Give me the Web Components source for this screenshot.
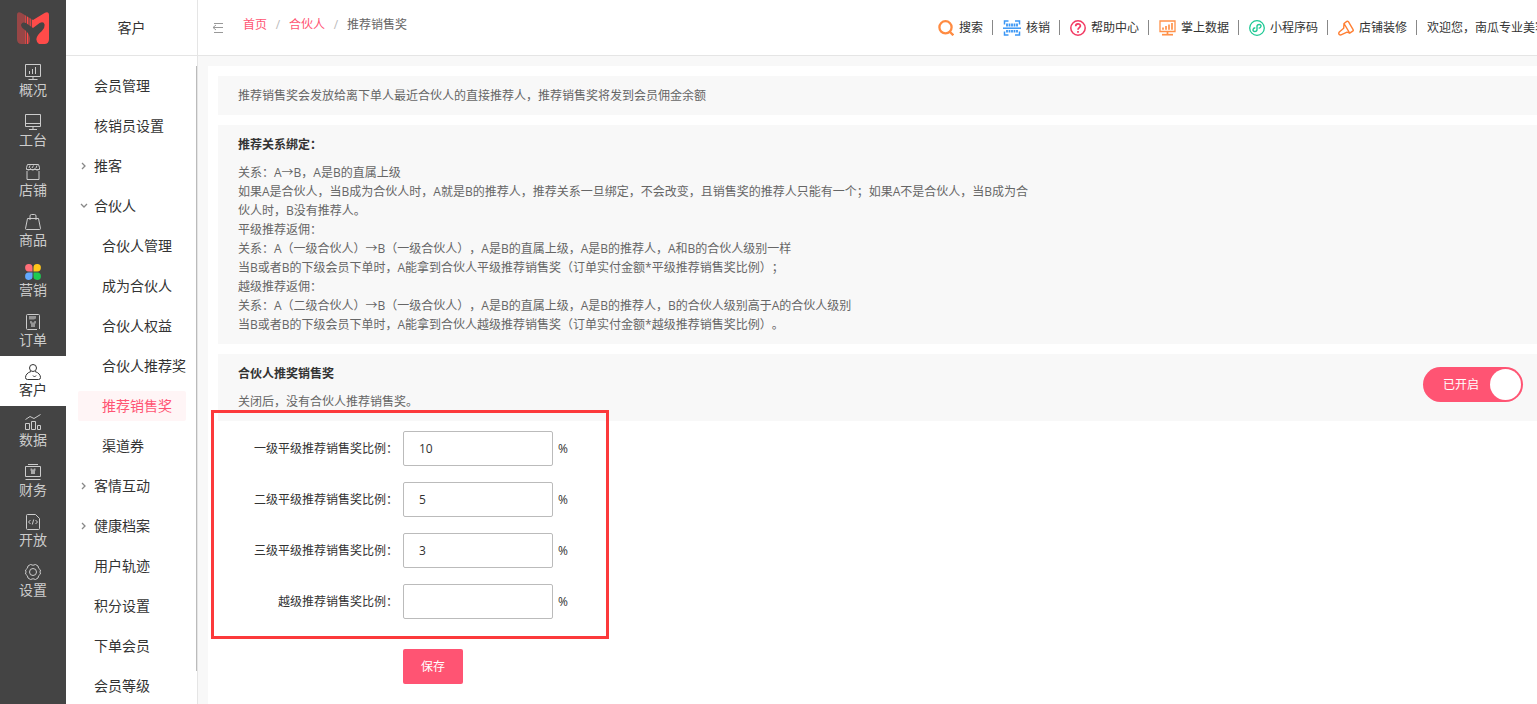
<!DOCTYPE html>
<html lang="zh-CN">
<head>
<meta charset="utf-8">
<meta name="viewport" content="width=device-width, initial-scale=1">
<title>推荐销售奖</title>
<style>
  html, body { height: 100%; margin: 0; }
  body {
    font: 12px/19px "Open Sans", "Noto Sans CJK SC", sans-serif;
    color: #333;
    background: #f8f8f8;
    text-spacing-trim: space-all;
    overflow: hidden;
  }
</style>
</head>
<body>
<app-shell>
  <rail-nav slot="rail">
    <rail-item icon="overview">概况</rail-item>
    <rail-item icon="desk">工台</rail-item>
    <rail-item icon="shop">店铺</rail-item>
    <rail-item icon="bag">商品</rail-item>
    <rail-item icon="clover">营销</rail-item>
    <rail-item icon="order">订单</rail-item>
    <rail-item icon="user" active>客户</rail-item>
    <rail-item icon="chart">数据</rail-item>
    <rail-item icon="money">财务</rail-item>
    <rail-item icon="code">开放</rail-item>
    <rail-item icon="gear">设置</rail-item>
  </rail-nav>

  <side-menu slot="menu" heading="客户">
    <menu-item>会员管理</menu-item>
    <menu-item>核销员设置</menu-item>
    <menu-item arrow="right">推客</menu-item>
    <menu-item arrow="down">合伙人</menu-item>
    <menu-item sub>合伙人管理</menu-item>
    <menu-item sub>成为合伙人</menu-item>
    <menu-item sub>合伙人权益</menu-item>
    <menu-item sub>合伙人推荐奖</menu-item>
    <menu-item sub active>推荐销售奖</menu-item>
    <menu-item sub>渠道券</menu-item>
    <menu-item arrow="right">客情互动</menu-item>
    <menu-item arrow="right">健康档案</menu-item>
    <menu-item>用户轨迹</menu-item>
    <menu-item>积分设置</menu-item>
    <menu-item>下单会员</menu-item>
    <menu-item>会员等级</menu-item>
  </side-menu>

  <top-bar slot="top">
    <crumb-item href="#home">首页</crumb-item>
    <crumb-item href="#partner">合伙人</crumb-item>
    <crumb-item>推荐销售奖</crumb-item>
    <tool-link slot="tools" icon="search">搜索</tool-link>
    <tool-link slot="tools" icon="scan">核销</tool-link>
    <tool-link slot="tools" icon="help">帮助中心</tool-link>
    <tool-link slot="tools" icon="screen">掌上数据</tool-link>
    <tool-link slot="tools" icon="mini">小程序码</tool-link>
    <tool-link slot="tools" icon="brush">店铺装修</tool-link>
    <span slot="welcome">欢迎您，南瓜专业美容</span>
  </top-bar>

  <info-block>推荐销售奖会发放给离下单人最近合伙人的直接推荐人，推荐销售奖将发到会员佣金余额</info-block>

  <info-block heading="推荐关系绑定：">
    <div>关系：A→B，A是B的直属上级</div>
    <div>如果A是合伙人，当B成为合伙人时，A就是B的推荐人，推荐关系一旦绑定，不会改变，且销售奖的推荐人只能有一个；如果A不是合伙人，当B成为合伙人时，B没有推荐人。</div>
    <div>平级推荐返佣：</div>
    <div>关系：A（一级合伙人）→B（一级合伙人），A是B的直属上级，A是B的推荐人，A和B的合伙人级别一样</div>
    <div>当B或者B的下级会员下单时，A能拿到合伙人平级推荐销售奖（订单实付金额*平级推荐销售奖比例）；</div>
    <div>越级推荐返佣：</div>
    <div>关系：A（二级合伙人）→B（一级合伙人），A是B的直属上级，A是B的推荐人，B的合伙人级别高于A的合伙人级别</div>
    <div>当B或者B的下级会员下单时，A能拿到合伙人越级推荐销售奖（订单实付金额*越级推荐销售奖比例）。</div>
  </info-block>

  <info-block heading="合伙人推奖销售奖">
    关闭后，没有合伙人推荐销售奖。
    <toggle-switch slot="action">已开启</toggle-switch>
  </info-block>

  <ratio-form>
    <percent-field label="一级平级推荐销售奖比例：" value="10"></percent-field>
    <percent-field label="二级平级推荐销售奖比例：" value="5"></percent-field>
    <percent-field label="三级平级推荐销售奖比例：" value="3"></percent-field>
    <percent-field label="越级推荐销售奖比例：" value=""></percent-field>
    <save-button slot="submit">保存</save-button>
  </ratio-form>
</app-shell>

<script>
const svg = (w, body, extra = '') =>
  `<svg width="${w}" height="16" viewBox="0 0 ${w} 16" fill="none" stroke="currentColor" ${extra} aria-hidden="true">${body}</svg>`;

const ICONS = {
  overview: svg(16, '<path d="M.5.5h15v12H.5zM8 12.5v3M3.500 15.500h9M4.500 7v3M7.500 5v5M10.500 3v7" />'),
  desk: svg(16, '<path d="M.5.5h15v12H.5zM.5 9.500h15M8 12.500v3M4 15.500h8"/>'),
  shop: svg(16, '<path d="M2.500.5h11l1 3v2H1.500v-2zM1.500 4.500c1 2 3 2 4 0 1 2 3.500 2 4.500 0 1 2 3.500 2 4.500 0M2 7v8.500h12V7M5 1.500 4 4M8.500 1.500 7 4M12 1.500 11 4"/>'),
  bag: svg(16, '<path d="M2.500 4.500h11l2 10q0 1-1 1h-13q-1 0-1-1zM5 6V2q0-1.500 1.500-1.500h3Q11 .5 11 2v4"/>'),
  clover: svg(16, '<path fill="#ff6f79" d="M7.500 7.500H4A3.700 3.700 0 1 1 7.500 4z"/><path fill="#ffc61a" d="M8.500 7.500V4A3.700 3.700 0 1 1 12 7.500z"/><path fill="#62a8ff" d="M7.500 8.500V12A3.700 3.700 0 1 1 4 8.500z"/><path fill="#1fcb52" d="M8.500 8.500H12A3.700 3.700 0 1 1 8.500 12z"/>', 'style="stroke:none"'),
  order: svg(16, '<path d="M12 15.500H2.500q-1 0-1-1v-13q0-1 1-1h11q1 0 1 1V15"/><path stroke="none" fill="currentColor" opacity=".6" d="M4 2h7v2.500l-2 1H4z"/><path stroke="none" fill="currentColor" opacity=".6" d="M5 7h1.500L8 9l1.500-2H11v2l-1 1v3H6v-3L5 9z"/>'),
  user: svg(16, '<circle cx="8" cy="4" r="3.500"/><path d="M6 7.500C2.500 8.500.5 11 .5 13.500q0 2 2 2h11q2 0 2-2c0-2.500-2-5-5.500-6M8 11.500l1.500 1.500 1.500-1.500"/>'),
  chart: svg(16, '<path d="M.5 9.500h4v6h-4zM6.500 7.500h4v8h-4zM12.500 11.500h3v4h-3zM.5 5.500 5 2.500l4 2 6.500-4"/>'),
  money: svg(16, '<path d="M.5 2.500h15v10H.5zM3 .5h10M.5 15.500h15"/><path stroke="none" fill="currentColor" opacity=".75" d="M5.500 4.500H7l1 1.500 1-1.500h1.500v2l-.5.500v3H6v-3l-.5-.5z"/>'),
  code: svg(16, '<path d="M10.500.5h-8q-1 0-1 1v13q0 1 1 1h11q1 0 1-1v-10zM5.500 6 3.500 8l2 2M10.500 6l2 2-2 2M8.700 5.500l-1.400 5"/>'),
  gear: svg(16, '<path d="M5.500.5q2.500 1.500 5 0l2.500 1.500q0 2.500 2.500 4-1 2 0 4-2.500 1.500-2.500 4l-2.500 1.500q-2.500-1.500-5 0L3 14q0-2.500-2.500-4 1-2 0-4Q3 4.500 3 2z"/><circle cx="8" cy="8" r="3.500"/>'),
  search: svg(16, '<circle cx="7.500" cy="7.300" r="6.100"/><path d="m12 12 3.300 3.300"/>', 'stroke-width="2.300" style="color:#ff8b41"'),
  scan: svg(18, '<path stroke-width="1.500" d="M1.500 4.500V1h4M12 1h4.500v3.500M1.500 11.500V15h4M12 15h4.500v-3.500"/><path stroke-width="1.500" d="M0 8.200h18"/><path stroke-width="1.800" d="M4 3.500v3M6.500 3.500v3M9 3.500v3M11.500 3.500v3M14 3.500v3M4 10v2.500M6.500 10v2.500M9 10v2.500M11.500 10v2.500M14 10v2.500"/>', 'style="color:#3b97f5"'),
  help: svg(16, '<circle cx="8" cy="8" r="7.200" stroke-width="1.500"/><path stroke-width="1.700" d="M5.700 6.300c0-3.200 4.700-3 4.700-.3C10.400 7.500 8 7.700 8 9.700M8 11v1.700"/>', 'style="color:#f23a63"'),
  screen: svg(17, '<path stroke-width="1.300" d="M1 1h15v10.500H1z"/><path stroke-width="1.700" d="M4 7.500v2.300M7 6v3.800M10 4.500v5.300M13 3v6.800M8.500 12v2"/><path stroke-width="1.700" d="M3 14.700h11"/>', 'style="color:#ff9149"'),
  mini: svg(16, '<circle cx="8" cy="8" r="7.300" stroke-width="1.300"/><path stroke-width="1.400" d="M6.300 7.700c-3 .3-3 3.800-.5 3.800 1.200 0 2.200-.8 2.200-2V6.500c0-1.200 1-2 2.200-2 2.500 0 2.500 3.500-.5 3.800"/>', 'style="color:#1fc995"'),
  brush: svg(16, '<path stroke-width="1.400" stroke-linejoin="round" d="M6 3.500 8.800 1.400q.9-.6 1.600.3l4.700 8q.5 1-.4 1.500l-3 2zM6 3.500l5.700 9.700M6 3.500 5.700 8.300 1.300 12q-1 1.200-.2 2.400 1.200 1 2.500.2L9 12.200l2.700 1"/>', 'style="color:#ff7f33"'),
  collapse: svg(12, '<path d="M2 3.500h9M1 7.500h10M2 12.500h9M4 5 1 7.500 4 10"/>'),
};

const define = (name, html, setup) => {
  const template = document.createElement('template');
  template.innerHTML = html;
  customElements.define(name, class extends HTMLElement {
    constructor() {
      super();
      this.attachShadow({ mode: 'open' }).append(template.content.cloneNode(true));
    }
    connectedCallback() {
      if (setup) setup(this, selector => this.shadowRoot.querySelector(selector));
    }
  });
};

define('app-shell', `
  <style>
    :host { display: grid; grid-template-columns: auto auto minmax(0, 1fr); grid-template-rows: minmax(0, 1fr); height: 100vh; }
    .page { display: flex; flex-direction: column; min-width: 0; }
    main { flex: 1; display: flex; flex-direction: column; gap: 10px; margin: 10px 0 0 10px; padding: 10px 0 10px 10px; background: #fff; }
  </style>
  <slot name="rail"></slot>
  <slot name="menu"></slot>
  <div class="page">
    <slot name="top"></slot>
    <main><slot></slot></main>
  </div>`);

define('rail-nav', `
  <style>
    :host { display: block; width: 66px; background: #444; color: #ccc; overflow: hidden; }
    .logo { display: flex; align-items: center; justify-content: center; height: 56px; }
  </style>
  <div class="logo">
    <svg width="32" height="32" viewBox="0 0 96 96" role="img" aria-label="logo">
      <path fill="#ff4b49" d="M48 24 84 2Q96-3 96 10V82Q96 96 82 96H14Q0 96 0 82V10Q0-3 12 2Z"/>
      <path fill="#444" opacity=".55" d="M0 0h24v96H0z"/>
      <path stroke="#444" stroke-width="4" opacity=".75" d="M28 8v88M36 14v82M43 18v60"/>
      <path fill="#444" d="M12 38Q16 28 28 34L48 48 68 33Q80 27 83 38 84 48 74 58 59 70 58 82 58 90 66 96H34Q40 90 39 80 38 66 24 54 12 46 12 38Z"/>
    </svg>
  </div>
  <nav><slot></slot></nav>`);

define('rail-item', `
  <style>
    :host { display: block; }
    a { display: flex; flex-direction: column; align-items: center; height: 42px; padding-top: 8px; font-size: 14px; line-height: 20px; color: inherit; text-decoration: none; }
    :host([active]) a { background: #fff; color: #333; }
    svg { display: block; }
  </style>
  <a href="#"><i></i><span><slot></slot></span></a>`,
  (el, $) => { $('i').innerHTML = ICONS[el.getAttribute('icon')]; });

define('side-menu', `
  <style>
    :host { display: flex; flex-direction: column; width: 131px; background: #fff; border-right: 1px solid #e5e5e5; overflow: hidden; position: relative; }
    h2 { flex: none; margin: 0; height: 55px; border-bottom: 1px solid #e5e5e5; font-size: 14px; font-weight: 400; line-height: 55px; text-align: center; }
    nav { flex: 1; min-height: 0; padding-top: 10px; overflow: hidden; }
    .thumb { position: absolute; top: 66px; right: 0; width: 1px; height: 86%; background: #bbb; }
  </style>
  <h2></h2>
  <nav><slot></slot></nav>
  <div class="thumb"></div>`,
  (el, $) => { $('h2').textContent = el.getAttribute('heading'); });

define('menu-item', `
  <style>
    :host { display: block; padding: 5px 11px 5px 12px; }
    a { display: flex; align-items: center; height: 30px; border-radius: 2px; font-size: 14px; line-height: 20px; color: #333; text-decoration: none; white-space: nowrap; }
    i { display: flex; justify-content: center; width: 12px; margin-right: 4px; }
    :host([sub]) i { margin-right: 12px; }
    :host([active]) a { background: #fff5f6; color: #ff5473; }
    svg { display: none; }
    :host([arrow]) svg { display: block; }
    :host([arrow="down"]) svg { transform: rotate(90deg); }
  </style>
  <a href="#"><i><svg width="8" height="8" viewBox="0 0 8 8" fill="none" stroke="#888" stroke-width="1.300"><path d="m2 1 3 3-3 3"/></svg></i><slot></slot></a>`);

define('top-bar', `
  <style>
    :host { display: flex; flex: none; align-items: center; height: 55px; background: #fff; border-bottom: 1px solid #e5e5e5; white-space: nowrap; overflow: hidden; }
    button { display: flex; margin: 0 19px 0 14px; padding: 0; border: 0; background: none; color: #999; }
    .crumbs { display: flex; padding-bottom: 6px; }
    .tools { display: flex; align-items: center; margin-left: auto; }
    .welcome { width: 110px; overflow: hidden; }
  </style>
  <button type="button" aria-label="收起">${ICONS.collapse}</button>
  <nav class="crumbs"><slot></slot></nav>
  <div class="tools"><slot name="tools"></slot><div class="welcome"><slot name="welcome"></slot></div></div>`);

define('crumb-item', `
  <style>
    :host { display: flex; color: #666; }
    a { color: #ff5473; text-decoration: none; }
    a:not([href]) { color: #666; }
    :host(:not(:last-of-type))::after { content: "/"; width: 22px; text-align: center; color: #bbb; }
  </style>
  <a><slot></slot></a>`,
  (el, $) => { if (el.hasAttribute('href')) $('a').href = el.getAttribute('href'); });

define('tool-link', `
  <style>
    :host { display: flex; align-items: center; }
    :host::after { content: ""; width: 1px; height: 15px; margin: 0 10px 0 9px; background: #888; }
    a { display: flex; align-items: center; gap: 5px; color: #333; text-decoration: none; }
    svg { display: block; }
  </style>
  <a href="#"><i></i><slot></slot></a>`,
  (el, $) => { $('i').innerHTML = ICONS[el.getAttribute('icon')]; });

define('info-block', `
  <style>
    :host { display: flex; align-items: flex-start; justify-content: space-between; padding: 10px 14px 10px 20px; background: #f8f8f8; color: #666; }
    .text { max-width: 800px; }
    h3 { margin: 0 0 9px; font-size: 12px; line-height: 19px; color: #333; }
    h3:empty { display: none; }
  </style>
  <div class="text"><h3></h3><slot></slot></div>
  <slot name="action"></slot>`,
  (el, $) => { $('h3').textContent = el.getAttribute('heading') || ''; });

define('toggle-switch', `
  <style>
    :host { display: block; padding-top: 3px; }
    label { display: flex; align-items: center; justify-content: space-between; box-sizing: border-box; width: 100px; height: 35px; padding: 0 2px 0 20px; border-radius: 18px; background: #ff5473; color: #fff; }
    input { appearance: none; width: 31px; height: 31px; margin: 0; border-radius: 50%; background: #fff; }
  </style>
  <label><slot></slot><input type="checkbox" role="switch" checked></label>`);

define('ratio-form', `
  <style>
    :host { display: block; position: relative; }
    form { display: flex; flex-direction: column; align-items: flex-start; gap: 16px; }
    .submit { padding: 14px 0 0 185px; }
    .frame { position: absolute; top: -21px; left: -7px; box-sizing: border-box; width: 398px; height: 229px; border: 3px solid #fc393b; pointer-events: none; }
  </style>
  <form>
    <slot></slot>
    <div class="submit"><slot name="submit"></slot></div>
  </form>
  <div class="frame"></div>`);

define('percent-field', `
  <style>
    :host { display: flex; align-items: center; gap: 5px; }
    label { width: 180px; text-align: right; }
    input { box-sizing: border-box; width: 150px; height: 35px; padding: 0 15px; border: 1px solid #bbb; border-radius: 2px; background: #fff; color: #333; font: inherit; outline: 0; }
  </style>
  <label for="ratio"></label><input id="ratio" type="text" inputmode="decimal"><span>%</span>`,
  (el, $) => {
    $('label').textContent = el.getAttribute('label');
    $('input').value = el.getAttribute('value');
  });

define('save-button', `
  <style>
    :host { display: block; }
    button { width: 60px; height: 35px; padding: 0; border: 0; border-radius: 2px; background: #ff5473; color: #fff; font: inherit; }
  </style>
  <button type="button"><slot></slot></button>`);
</script>
</body>
</html>
